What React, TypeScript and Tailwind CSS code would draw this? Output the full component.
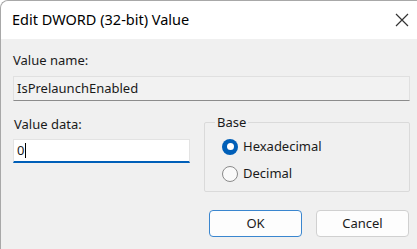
import React from 'react';

const font = { fontFamily: '"Noto Sans", "Open Sans", sans-serif' };

const Radio = ({ checked, label }: { checked: boolean; label: string }) => (
  <div className="flex items-center gap-[5px] h-[27px]">
    {checked ? (
      <span className="w-[16px] h-[16px] rounded-full bg-[#005fb8] flex items-center justify-center">
        <span className="w-[7px] h-[7px] rounded-full bg-white" />
      </span>
    ) : (
      <span className="w-[16px] h-[16px] rounded-full bg-[#fafafa] border border-[#8a8a8a]" />
    )}
    <span>{label}</span>
  </div>
);

export default function App() {
  return (
    <div
      className="w-[417px] h-[249px] overflow-hidden bg-white text-[13px] text-[#1a1a1a]"
      style={font}
    >
      <div className="w-[430px] h-[260px] bg-[#f0f0f0] border-l border-t border-[#a8a8a8] rounded-tl-[8px] flex flex-col">
        {/* Title bar */}
        <div className="h-[38px] bg-white rounded-tl-[8px] flex items-center justify-between pl-[11px] pr-[20px]">
          <span className="text-[14.5px] text-black">Edit DWORD (32-bit) Value</span>
          <svg width="14" height="14" viewBox="0 0 14 14" className="mr-[1px]">
            <path d="M1 1 L13 13 M13 1 L1 13" stroke="#333" strokeWidth="1.2" />
          </svg>
        </div>

        <div className="flex flex-col pl-[12px] pr-[19px] pt-[12px]">
          <div className="leading-[18px]">Value name:</div>
          <div className="mt-[7px] h-[25px] w-[397px] bg-[#f2f2f2] border border-[#e0e0e0] border-b-[#8c8c8c] flex items-center pl-[3px]">
            IsPrelaunchEnabled
          </div>

          <div className="flex mt-[12px]">
            <div className="flex flex-col w-[177px]">
              <div className="leading-[18px] pt-[2px] pl-[1px]">Value data:</div>
              <div className="mt-[6px] h-[24px] bg-white border border-[#e3e3e3] border-b-2 border-b-[#005fb8] flex items-center pl-[3px]">
                <span>0</span>
                <span className="w-[1px] h-[15px] bg-black ml-[1px]" />
              </div>
            </div>

            <div className="ml-[14px] mt-[9px] relative w-[206px] h-[70px] border border-[#dadada] rounded-[2px] pt-[10px] pl-[17px]">
              <span className="absolute -top-[10px] left-[10px] bg-[#f0f0f0] px-[2px] leading-[18px]">Base</span>
              <Radio checked label="Hexadecimal" />
              <Radio checked={false} label="Decimal" />
            </div>
          </div>

          <div className="flex justify-end gap-[14px] mt-[18px] w-[396px]">
            <button className="w-[93px] h-[27px] bg-[#fdfdfd] border border-[#3a86cf] rounded-[4px] text-[#1a1a1a]">
              OK
            </button>
            <button className="w-[93px] h-[27px] bg-[#fdfdfd] border border-[#d0d0d0] rounded-[4px] text-[#1a1a1a]">
              Cancel
            </button>
          </div>
        </div>
      </div>
    </div>
  );
}
